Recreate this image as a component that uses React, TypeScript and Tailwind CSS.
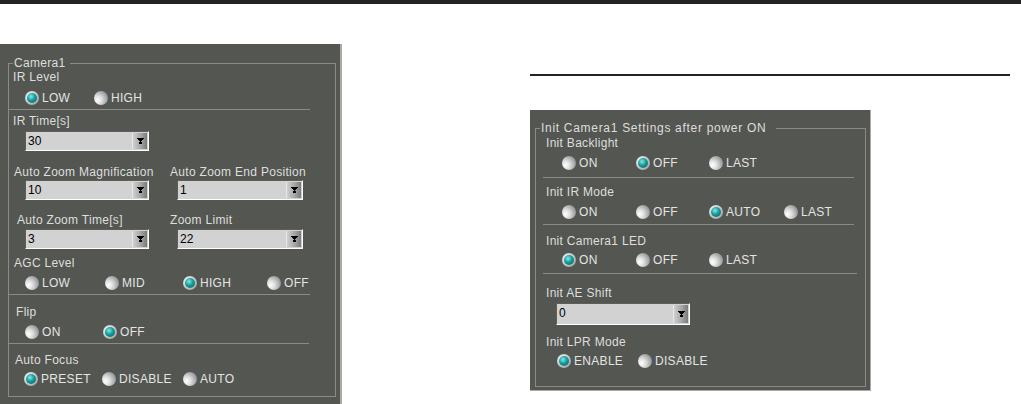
import React from "react";

type Opt = { label: string; on?: boolean; w?: string };

function Radio({ on }: { on?: boolean }) {
  return on ? (
    <span className="inline-block w-[14px] h-[14px] shrink-0 rounded-full bg-[radial-gradient(circle_at_35%_35%,#ffffff,#c4c4c4_55%,#7c7c7c)] p-[2px]">
      <span className="block w-full h-full rounded-full bg-[radial-gradient(circle_at_40%_35%,#8ee6e6,#119c9c_45%,#055a5a)]" />
    </span>
  ) : (
    <span className="inline-block w-[14px] h-[14px] shrink-0 rounded-full bg-[radial-gradient(circle_at_25%_65%,#ffffff,#e0e0e0_30%,#a0a0a0_70%,#707070)]" />
  );
}

function RadioRow({ opts, className }: { opts: Opt[]; className: string }) {
  return (
    <div className={`flex items-center h-[14px] ${className}`}>
      {opts.map((o) => (
        <div key={o.label} className={`flex items-center gap-[3px] ${o.w ?? ""}`}>
          <Radio on={o.on} />
          <span className="text-[12px] leading-[13px] tracking-[0.3px] text-[#e4e4e4]">{o.label}</span>
        </div>
      ))}
    </div>
  );
}

function Label({ children, className }: { children: React.ReactNode; className: string }) {
  return (
    <div className={`h-[13px] text-[12px] leading-[13px] tracking-[0.3px] text-[#dedede] whitespace-nowrap ${className}`}>
      {children}
    </div>
  );
}

function Select({ value, className }: { value: string; className: string }) {
  return (
    <div
      className={`flex bg-[#d2d2d2] border border-t-[#5e5e5e] border-l-[#5e5e5e] border-r-white border-b-white ${className}`}
    >
      <div className="flex-1 pl-[2px] text-[12px] leading-[18px] text-black">{value}</div>
      <div className="w-[15px] my-[1px] mr-[1px] flex items-center justify-center bg-[linear-gradient(to_right,#cfcfcf,#a6a6a6_55%,#7a7a7a)] border-l border-[#e8e8e8]">
        <svg width="7" height="6" viewBox="0 0 7 6" shapeRendering="crispEdges">
          <polygon points="0,0 7,0 3.5,4" fill="#000" />
          <rect x="2" y="4" width="3" height="2" fill="#000" />
        </svg>
      </div>
    </div>
  );
}

function Sep({ className }: { className: string }) {
  return <div className={`h-px bg-[#8a8b87] ${className}`} />;
}

export default function App() {
  return (
    <div className="w-[1021px] h-[404px] overflow-hidden bg-white font-['Liberation_Sans',Arial,sans-serif]">
      <div className="h-[4px] bg-[#232323]" />
      <div className="flex">
        {/* Left panel */}
        <div className="mt-[40px] w-[342px] h-[400px] shrink-0 bg-[#545651] border-r-2 border-[#a9aaa6] pl-[8px] pr-[4px] pt-[13px]">
          <fieldset className="border border-[#8a8b87] min-w-0 pb-[10px] w-[328px]">
            <legend className="ml-[4px] pl-[1px] pr-[5px] h-[13px] text-[12px] leading-[13px] tracking-[0.3px] text-[#dedede]">
              Camera1
            </legend>
            <Label className="mt-[1px] ml-[4px]">IR Level</Label>
            <RadioRow
              className="mt-[7px] ml-[16px]"
              opts={[
                { label: "LOW", on: true, w: "w-[69px]" },
                { label: "HIGH" },
              ]}
            />
            <Sep className="mt-[4px] w-[301px]" />
            <Label className="mt-[5px] ml-[4px]">IR Time[s]</Label>
            <Select value="30" className="mt-[3px] ml-[16px] w-[124px] h-[20px]" />
            <div className="flex mt-[15px]">
              <div className="w-[161px]">
                <Label className="ml-[5px]">Auto Zoom Magnification</Label>
              </div>
              <div>
                <Label className="">Auto Zoom End Position</Label>
              </div>
            </div>
            <div className="flex mt-[1px]">
              <div className="w-[161px]">
                <Select value="10" className="ml-[16px] w-[124px] h-[20px]" />
              </div>
              <div>
                <Select value="1" className="ml-[7px] w-[126px] h-[20px]" />
              </div>
            </div>
            <div className="flex mt-[14px]">
              <div className="w-[161px]">
                <Label className="ml-[8px]">Auto Zoom Time[s]</Label>
              </div>
              <div>
                <Label className="">Zoom Limit</Label>
              </div>
            </div>
            <div className="flex mt-[2px]">
              <div className="w-[161px]">
                <Select value="3" className="ml-[16px] w-[124px] h-[20px]" />
              </div>
              <div>
                <Select value="22" className="ml-[7px] w-[126px] h-[20px]" />
              </div>
            </div>
            <Label className="mt-[8px] ml-[5px]">AGC Level</Label>
            <RadioRow
              className="mt-[6px] ml-[16px]"
              opts={[
                { label: "LOW", w: "w-[80px]" },
                { label: "MID", w: "w-[78px]" },
                { label: "HIGH", on: true, w: "w-[84px]" },
                { label: "OFF" },
              ]}
            />
            <Sep className="mt-[4px] w-[301px]" />
            <Label className="mt-[11px] ml-[7px]">Flip</Label>
            <RadioRow
              className="mt-[6px] ml-[16px]"
              opts={[
                { label: "ON", w: "w-[78px]" },
                { label: "OFF", on: true },
              ]}
            />
            <Sep className="mt-[4px] w-[300px]" />
            <Label className="mt-[10px] ml-[6px]">Auto Focus</Label>
            <RadioRow
              className="mt-[5px] ml-[15px]"
              opts={[
                { label: "PRESET", on: true, w: "w-[78px]" },
                { label: "DISABLE", w: "w-[81px]" },
                { label: "AUTO" },
              ]}
            />
          </fieldset>
        </div>

        {/* Right area */}
        <div className="ml-[188px] flex flex-col">
          <div className="mt-[70px] w-[480px] h-[2px] bg-[#232323]" />
          <div className="mt-[34px] w-[341px] h-[281px] bg-[#545651] border-r border-b border-[#a9aaa6] pl-[5px] pt-[12px]">
            <fieldset className="border border-[#8a8b87] min-w-0 w-[331px] pb-[18px]">
              <legend className="ml-[4px] pl-[1px] pr-[10px] h-[13px] text-[12px] leading-[13px] tracking-[0.7px] text-[#dedede]">
                Init Camera1 Settings after power ON
              </legend>
              <Label className="mt-[2px] ml-[10px]">Init Backlight</Label>
              <RadioRow
                className="mt-[6px] ml-[26px]"
                opts={[
                  { label: "ON", w: "w-[74px]" },
                  { label: "OFF", on: true, w: "w-[73px]" },
                  { label: "LAST" },
                ]}
              />
              <Sep className="mt-[7px] ml-[7px] w-[311px]" />
              <Label className="mt-[8px] ml-[10px]">Init IR Mode</Label>
              <RadioRow
                className="mt-[6px] ml-[26px]"
                opts={[
                  { label: "ON", w: "w-[74px]" },
                  { label: "OFF", w: "w-[73px]" },
                  { label: "AUTO", on: true, w: "w-[75px]" },
                  { label: "LAST" },
                ]}
              />
              <Sep className="mt-[5px] ml-[7px] w-[311px]" />
              <Label className="mt-[10px] ml-[10px]">Init Camera1 LED</Label>
              <RadioRow
                className="mt-[5px] ml-[26px]"
                opts={[
                  { label: "ON", on: true, w: "w-[74px]" },
                  { label: "OFF", w: "w-[73px]" },
                  { label: "LAST" },
                ]}
              />
              <Sep className="mt-[6px] ml-[7px] w-[314px]" />
              <Label className="mt-[13px] ml-[10px]">Init AE Shift</Label>
              <Select value="0" className="mt-[3px] ml-[20px] w-[134px] h-[22px]" />
              <Label className="mt-[11px] ml-[10px]">Init LPR Mode</Label>
              <RadioRow
                className="mt-[5px] ml-[21px]"
                opts={[
                  { label: "ENABLE", on: true, w: "w-[81px]" },
                  { label: "DISABLE" },
                ]}
              />
            </fieldset>
          </div>
        </div>
      </div>
    </div>
  );
}
